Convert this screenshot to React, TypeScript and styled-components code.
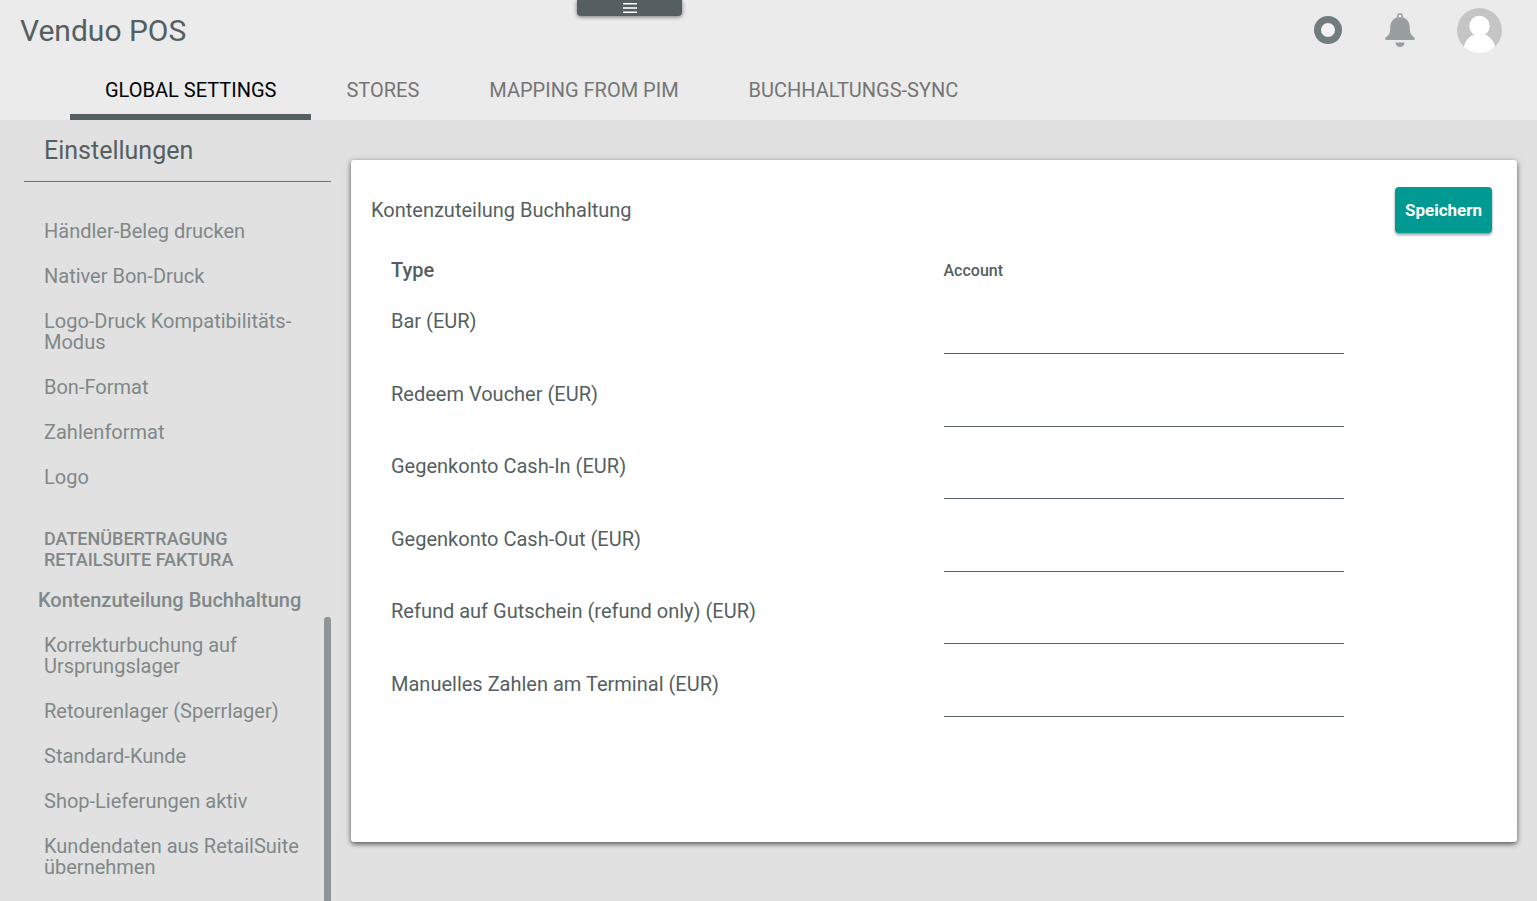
import React from "react";
import styled, { createGlobalStyle } from "styled-components";

const GlobalStyle = createGlobalStyle`
  *, *::before, *::after { box-sizing: border-box; }
  html, body, #root { height: 100%; }
  body {
    margin: 0;
    background: #e1e1e1;
    color: #555f61;
    font-family: Roboto, "Liberation Sans", sans-serif;
    font-size: 20px;
    line-height: 21px;
  }
  button, input { font-family: inherit; }
`;

const Shell = styled.div`
  display: flex;
  flex-direction: column;
  height: 100vh;
  overflow: hidden;
`;

const Header = styled.header`
  position: relative;
  flex: none;
  background: #ebebeb;
`;

const TopBar = styled.div`
  display: flex;
  align-items: center;
  justify-content: space-between;
  height: 60px;
  padding: 0 35px 0 20px;
`;

const AppTitle = styled.h1`
  margin: 0;
  font-size: 30px;
  line-height: 37px;
  font-weight: 400;
`;

const Actions = styled.div`
  display: flex;
  align-items: center;
  gap: 42px;
`;

const IconButton = styled.button`
  display: grid;
  place-items: center;
  min-width: 30px;
  padding: 0;
  border: 0;
  background: none;
  cursor: pointer;
`;

const MenuHandle = styled.button`
  position: absolute;
  top: 0;
  left: calc(41% - 53px);
  display: grid;
  place-items: center;
  width: 105px;
  height: 16px;
  padding: 0;
  border: 0;
  border-radius: 0 0 4px 4px;
  background: #555f61;
  box-shadow: 0 1px 4px rgba(0, 0, 0, 0.5);
  cursor: pointer;
`;

const Tabs = styled.nav`
  display: flex;
  height: 60px;
  padding-left: 70px;
`;

const Tab = styled.a<{ $active?: boolean }>`
  padding: 20px 35px 0;
  border-bottom: 6px solid ${(p) => (p.$active ? "#555f61" : "transparent")};
  color: ${(p) => (p.$active ? "#000" : "#757575")};
  text-decoration: none;
  text-transform: uppercase;
  white-space: nowrap;
`;

const Body = styled.div`
  display: flex;
  flex: 1;
  min-height: 0;
`;

const Sidebar = styled.aside`
  position: relative;
  display: flex;
  flex-direction: column;
  flex: none;
  width: 307px;
  margin-left: 24px;
  overflow: hidden;
`;

const SidebarTitle = styled.h2`
  flex: none;
  margin: 0;
  height: 62px;
  padding: 16px 20px 0;
  border-bottom: 1px solid #6f7576;
  font-size: 25px;
  line-height: 30px;
  font-weight: 400;
`;

const SideList = styled.ul`
  margin: 0;
  padding: 27px 26px 0 20px;
  list-style: none;
`;

const SideLink = styled.a<{ $active?: boolean }>`
  display: block;
  margin-left: ${(p) => (p.$active ? "-6px" : "0")};
  padding: 12px 0;
  color: #808889;
  font-weight: ${(p) => (p.$active ? 500 : 400)};
  text-decoration: none;
`;

const SideGroup = styled.h3`
  margin: 0;
  padding: 28px 0 8px;
  color: #808889;
  font-size: 18px;
  line-height: 21px;
  font-weight: 500;
  text-transform: uppercase;
`;

const ScrollThumb = styled.div`
  position: absolute;
  right: 0;
  bottom: 0;
  width: 7px;
  height: 284px;
  border-radius: 3px 3px 0 0;
  background: #8f9596;
`;

const Main = styled.main`
  flex: 1;
  min-width: 0;
  padding: 40px 20px;
`;

const Card = styled.form`
  padding: 27px 25px 110px 20px;
  border-radius: 3px;
  background: #fff;
  box-shadow: 0 2px 5px rgba(0, 0, 0, 0.6), 0 0 12px rgba(0, 0, 0, 0.08);
`;

const CardHead = styled.div`
  display: flex;
  align-items: center;
  justify-content: space-between;
`;

const CardTitle = styled.h2`
  margin: 0;
  font-size: 20px;
  line-height: 24px;
  font-weight: 400;
`;

const SaveButton = styled.button`
  height: 46px;
  padding: 0 10px;
  border: 0;
  border-radius: 4px;
  background: #009a93;
  box-shadow: 0 2px 3px rgba(0, 0, 0, 0.4);
  color: #fff;
  font-size: 17px;
  font-weight: 700;
  cursor: pointer;
`;

const AccountTable = styled.table`
  width: 100%;
  height: 499px;
  border-collapse: collapse;
  table-layout: fixed;
`;

const HeadRow = styled.tr`
  height: 64px;
`;

const HeadCell = styled.th<{ $small?: boolean }>`
  padding: 27px 0 0 20px;
  font-size: ${(p) => (p.$small ? 16 : 20)}px;
  line-height: 21px;
  font-weight: 500;
  text-align: left;
  vertical-align: top;
  &:last-child { padding-left: 12px; }
`;

const Cell = styled.td`
  padding: 14px 0 0 20px;
  vertical-align: top;
  &:last-child { padding-left: 12px; }
`;

const AccountInput = styled.input`
  display: block;
  width: 400px;
  max-width: 100%;
  height: 43px;
  padding: 0;
  border: 0;
  border-bottom: 1px solid #555f61;
  border-radius: 0;
  outline: 0;
  background: transparent;
  color: inherit;
  font-size: 20px;
`;

const settings = [
  "Händler-Beleg drucken",
  "Nativer Bon-Druck",
  "Logo-Druck Kompatibilitäts-Modus",
  "Bon-Format",
  "Zahlenformat",
  "Logo",
];

const transfer = [
  "Kontenzuteilung Buchhaltung",
  "Korrekturbuchung auf Ursprungslager",
  "Retourenlager (Sperrlager)",
  "Standard-Kunde",
  "Shop-Lieferungen aktiv",
  "Kundendaten aus RetailSuite übernehmen",
];

const accounts = [
  "Bar (EUR)",
  "Redeem Voucher (EUR)",
  "Gegenkonto Cash-In (EUR)",
  "Gegenkonto Cash-Out (EUR)",
  "Refund auf Gutschein (refund only) (EUR)",
  "Manuelles Zahlen am Terminal (EUR)",
];

const tabs = ["Global Settings", "Stores", "Mapping from PIM", "Buchhaltungs-Sync"];

export default function App() {
  return (
    <Shell>
      <GlobalStyle />
      <Header>
        <TopBar>
          <AppTitle>Venduo POS</AppTitle>
          <Actions>
            <IconButton type="button" aria-label="Status">
              <svg width="28" height="28" viewBox="0 0 28 28">
                <circle cx="14" cy="14" r="10.5" fill="#f2f2f2" stroke="#727b7d" strokeWidth="7" />
              </svg>
            </IconButton>
            <IconButton type="button" aria-label="Notifications">
              <svg width="30" height="34" viewBox="0 0 30 34" fill="#979e9e">
                <path
                  fillRule="evenodd"
                  d="M15 0a3 3 0 0 1 2.7 4.3C23 6 24.500 10 24.700 14.500c.2 5 1 7.500 4.300 9.500.5.300.6.600.6 1.200V27H.4v-1.800c0-.6.1-.9.600-1.200 3.300-2 4.100-4.500 4.300-9.500C5.500 10 7 6 12.300 4.300A3 3 0 0 1 15 0Zm0 1.600a1.500 1.500 0 1 0 0 3 1.500 1.500 0 0 0 0-3Z"
                />
                <path d="M10.500 29.500h9a4.500 4.500 0 0 1-9 0Z" />
              </svg>
            </IconButton>
            <IconButton type="button" aria-label="Profile">
              <svg width="45" height="45" viewBox="0 0 45 45">
                <circle cx="22.500" cy="22.500" r="22.500" fill="#c5c5c5" />
                <circle cx="22.500" cy="18" r="10.200" fill="#fff" />
                <path
                  fill="#fff"
                  d="M16 27h13c4.500 2 8 6.500 9.200 11.700a22.500 22.500 0 0 1-31.400 0C8 33.500 11.500 29 16 27Z"
                />
              </svg>
            </IconButton>
          </Actions>
        </TopBar>
        <MenuHandle type="button" aria-label="Open menu">
          <svg width="14" height="10" viewBox="0 0 14 10" fill="#fff">
            <rect y="0" width="14" height="1.500" />
            <rect y="4" width="14" height="2" fillOpacity="0.8" />
            <rect y="8.500" width="14" height="1.500" />
          </svg>
        </MenuHandle>
        <Tabs>
          {tabs.map((tab, i) => (
            <Tab key={tab} href="#" $active={i === 0}>
              {tab}
            </Tab>
          ))}
        </Tabs>
      </Header>
      <Body>
        <Sidebar>
          <SidebarTitle>Einstellungen</SidebarTitle>
          <SideList>
            {settings.map((item) => (
              <li key={item}>
                <SideLink href="#">{item}</SideLink>
              </li>
            ))}
            <li>
              <SideGroup>Datenübertragung RetailSuite Faktura</SideGroup>
            </li>
            {transfer.map((item, i) => (
              <li key={item}>
                <SideLink href="#" $active={i === 0}>
                  {item}
                </SideLink>
              </li>
            ))}
          </SideList>
          <ScrollThumb />
        </Sidebar>
        <Main>
          <Card>
            <CardHead>
              <CardTitle>Kontenzuteilung Buchhaltung</CardTitle>
              <SaveButton type="button">Speichern</SaveButton>
            </CardHead>
            <AccountTable>
              <thead>
                <HeadRow>
                  <HeadCell scope="col">Type</HeadCell>
                  <HeadCell scope="col" $small>
                    Account
                  </HeadCell>
                </HeadRow>
              </thead>
              <tbody>
                {accounts.map((name, i) => (
                  <tr key={name}>
                    <Cell>
                      <label htmlFor={`account-${i}`}>{name}</label>
                    </Cell>
                    <Cell>
                      <AccountInput id={`account-${i}`} type="text" />
                    </Cell>
                  </tr>
                ))}
              </tbody>
            </AccountTable>
          </Card>
        </Main>
      </Body>
    </Shell>
  );
}
